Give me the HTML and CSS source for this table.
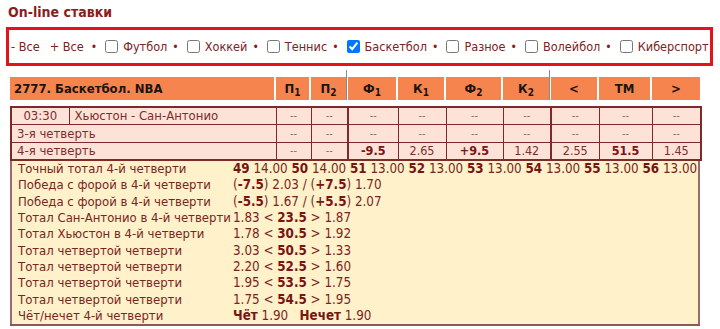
FILE: index.html
```html
<!DOCTYPE html>
<html lang="ru">
<head>
<meta charset="utf-8">
<title>On-line ставки</title>
<link rel="stylesheet" href="styles.css">
</head>
<body>
<div class="page">
  <h1 class="title">On-line ставки</h1>
  <div class="filters">
    <span class="all minus">- Все</span>
    <span class="all">+ Все</span>
    <span class="sep">•</span>
    <label><input type="checkbox">Футбол</label>
    <span class="sep">•</span>
    <label><input type="checkbox">Хоккей</label>
    <span class="sep">•</span>
    <label><input type="checkbox">Теннис</label>
    <span class="sep">•</span>
    <label><input type="checkbox" checked>Баскетбол</label>
    <span class="sep">•</span>
    <label><input type="checkbox">Разное</label>
    <span class="sep">•</span>
    <label><input type="checkbox">Волейбол</label>
    <span class="sep">•</span>
    <label><input type="checkbox">Киберспорт</label>
  </div>

  <div class="board">
    <table class="head">
      <colgroup>
        <col class="c-time"><col class="c-team"><col class="c-p1"><col class="c-p2"><col class="c-f1"><col class="c-k1"><col class="c-f2"><col class="c-k2"><col class="c-lt"><col class="c-tm"><col class="c-gt">
      </colgroup>
      <tr>
        <th colspan="2" class="league">2777. Баскетбол. NBA</th>
        <th>П<sub>1</sub></th>
        <th>П<sub>2</sub></th>
        <th class="mark">Ф<sub>1</sub></th>
        <th>К<sub>1</sub></th>
        <th>Ф<sub>2</sub></th>
        <th>К<sub>2</sub></th>
        <th class="mark">&lt;</th>
        <th>ТМ</th>
        <th>&gt;</th>
      </tr>
    </table>

    <table class="odds">
      <colgroup>
        <col class="c-time"><col class="c-team"><col class="c-p1"><col class="c-p2"><col class="c-f1"><col class="c-k1"><col class="c-f2"><col class="c-k2"><col class="c-lt"><col class="c-tm"><col class="c-gt">
      </colgroup>
      <tr>
        <td class="time">03:30</td>
        <td class="name">Хьюстон - Сан-Антонио</td>
        <td class="na">--</td><td class="na">--</td><td class="na thick">--</td><td class="na">--</td><td class="na">--</td><td class="na">--</td><td class="na thick">--</td><td class="na">--</td><td class="na">--</td>
      </tr>
      <tr class="r2">
        <td colspan="2" class="name">3-я четверть</td>
        <td class="na">--</td><td class="na">--</td><td class="na thick">--</td><td class="na">--</td><td class="na">--</td><td class="na">--</td><td class="na thick">--</td><td class="na">--</td><td class="na">--</td>
      </tr>
      <tr>
        <td colspan="2" class="name">4-я четверть</td>
        <td class="na">--</td><td class="na">--</td><td class="b thick">-9.5</td><td>2.65</td><td class="b">+9.5</td><td>1.42</td><td class="thick">2.55</td><td class="b">51.5</td><td>1.45</td>
      </tr>
    </table>

    <table class="details">
      <tr><td class="lbl">Точный тотал 4-й четверти</td><td class="val"><b>49</b> 14.00 <b>50</b> 14.00 <b>51</b> 13.00 <b>52</b> 13.00 <b>53</b> 13.00 <b>54</b> 13.00 <b>55</b> 13.00 <b>56</b> 13.00</td></tr>
      <tr><td class="lbl">Победа с форой в 4-й четверти</td><td class="val">(<b>-7.5</b>) 2.03 / (<b>+7.5</b>) 1.70</td></tr>
      <tr><td class="lbl">Победа с форой в 4-й четверти</td><td class="val">(<b>-5.5</b>) 1.67 / (<b>+5.5</b>) 2.07</td></tr>
      <tr><td class="lbl">Тотал Сан-Антонио в 4-й четверти</td><td class="val">1.83 &lt; <b>23.5</b> &gt; 1.87</td></tr>
      <tr><td class="lbl">Тотал Хьюстон в 4-й четверти</td><td class="val">1.78 &lt; <b>30.5</b> &gt; 1.92</td></tr>
      <tr><td class="lbl">Тотал четвертой четверти</td><td class="val">3.03 &lt; <b>50.5</b> &gt; 1.33</td></tr>
      <tr><td class="lbl">Тотал четвертой четверти</td><td class="val">2.20 &lt; <b>52.5</b> &gt; 1.60</td></tr>
      <tr><td class="lbl">Тотал четвертой четверти</td><td class="val">1.95 &lt; <b>53.5</b> &gt; 1.75</td></tr>
      <tr><td class="lbl">Тотал четвертой четверти</td><td class="val">1.75 &lt; <b>54.5</b> &gt; 1.95</td></tr>
      <tr><td class="lbl">Чёт/нечет 4-й четверти</td><td class="val"><b>Чёт</b> 1.90 &nbsp; <b>Нечет</b> 1.90</td></tr>
    </table>
  </div>
</div>
</body>
</html>
```
FILE: styles.css
```css
html, body {
  margin: 0;
  padding: 0;
  background: #ffffff;
}

body {
  font-family: "DejaVu Sans Condensed", "DejaVu Sans", Verdana, sans-serif;
  font-size: 13px;
  color: #7a2222;
}

.page {
  width: 720px;
  padding-top: 3px;
}

.title {
  margin: 0 0 0 8px;
  font-size: 14px;
  line-height: 18px;
  font-weight: bold;
  color: #8b1d1d;
}

.filters {
  margin: 6px 7px 0 6px;
  border: 3px solid #e3121b;
  height: 33px;
  padding-left: 2px;
  display: flex;
  align-items: center;
  white-space: nowrap;
  font-size: 12.6px;
  color: #7a2424;
  overflow: hidden;
}

.filters .all {
  margin-right: 7px;
}

.filters .all.minus {
  margin-right: 10px;
}

.filters .sep {
  color: #8b1d1d;
  font-size: 12px;
  margin-right: 8px;
}

.filters label {
  display: flex;
  align-items: center;
  margin-right: 5px;
}

.filters input {
  width: 13px;
  height: 13px;
  margin: 0 5px 0 0;
  flex: none;
}

.board {
  margin: 11px 0 0 10px;
  width: 690px;
}

table {
  table-layout: fixed;
  width: 690px;
  border-collapse: collapse;
}

.c-time { width: 58px; }
.c-team { width: 207px; }
.c-p1 { width: 35px; }
.c-p2 { width: 37px; }
.c-f1 { width: 50px; }
.c-k1 { width: 48px; }
.c-f2 { width: 57px; }
.c-k2 { width: 48px; }
.c-lt { width: 48px; }
.c-tm { width: 53px; }
.c-gt { width: 49px; }

.head th {
  position: relative;
  height: 23px;
  padding: 0;
  background: #f6844f;
  color: #1d1410;
  font-weight: bold;
  font-size: 13px;
  text-align: center;
  border-left: 2px solid #ffffff;
}

.head th sub {
  font-size: 10px;
  vertical-align: -3px;
  line-height: 0;
}

.head th.league {
  text-align: left;
  padding-left: 4px;
  border-left: 0;
}

.head th.mark::before {
  content: "";
  position: absolute;
  left: -2px;
  top: -7px;
  bottom: 0;
  width: 1px;
  background: #8a8a8a;
}

.odds {
  margin-top: 6px;
  border: 2px solid #7e2a2a;
}

.odds td {
  height: 16px;
  padding: 0;
  border: 1px solid #7e2a2a;
  background: #fde2d8;
  text-align: center;
  font-size: 12.5px;
  color: #7e2d2d;
  line-height: 16px;
}

.odds tr.r2 td {
  height: 17px;
}

.odds td.name {
  text-align: left;
  padding-left: 5px;
  font-size: 13px;
}

.odds td.time {
  font-size: 13px;
}

.odds td.na {
  color: #8a6a6a;
  font-size: 11px;
}

.odds td.thick {
  border-left: 2px solid #7e2a2a;
}

.odds td.b {
  font-weight: bold;
  color: #7a1515;
}

.details {
  border-left: 2px solid #a06a6a;
  border-right: 2px solid #a06a6a;
  border-bottom: 2px solid #8a5a5a;
  background: #fff1c9;
}

.details td {
  padding: 0;
  line-height: 16.33px;
  white-space: nowrap;
  font-size: 13px;
  color: #7a2424;
}

.details td.lbl {
  width: 215px;
  padding-left: 6px;
}

.details td.val {
  padding-left: 0;
  font-size: 13.3px;
}

.details b {
  color: #7a1414;
}
```
